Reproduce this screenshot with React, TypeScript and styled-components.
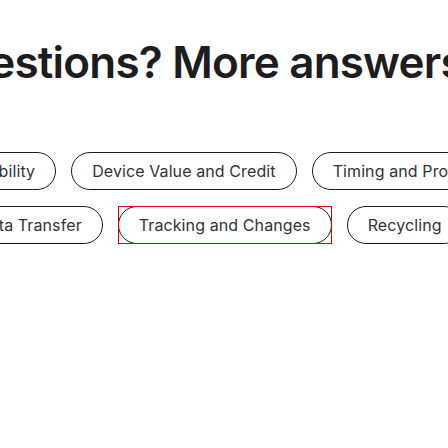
import React from "react"
import styled, { createGlobalStyle, css } from "styled-components"

const GlobalStyle = createGlobalStyle`
  html, body {
    margin: 0;
    padding: 0;
    background: #fff;
  }
  body {
    font-family: Inter, "Noto Sans", "Liberation Sans", sans-serif;
    color: #1d1d1f;
    -webkit-font-smoothing: antialiased;
  }
`

interface Topic {
  label: string
  focused?: boolean
}

// the rows are horizontally scrolled; offset is the scroll position
const rows: { offset: number; topics: Topic[] }[] = [
  {
    offset: -54,
    topics: [
      { label: "Eligibility" },
      { label: "Device Value and Credit" },
      { label: "Timing and Process" },
    ],
  },
  {
    offset: -43,
    topics: [
      { label: "Data Transfer" },
      { label: "Tracking and Changes", focused: true },
      { label: "Recycling" },
    ],
  },
]

export default function App() {
  return (
    <>
      <GlobalStyle />
      <Section>
        <TitleRow>
          <Title>Questions? More answers.</Title>
        </TitleRow>

        <Topics>
          {rows.map((row, i) => (
            <PillRow key={i} $offset={row.offset}>
              {row.topics.map(topic => (
                <Pill key={topic.label} $focused={topic.focused}>
                  {topic.label}
                </Pill>
              ))}
            </PillRow>
          ))}
        </Topics>
      </Section>
    </>
  )
}

const Section = styled.section`
  width: 448px;
  height: 448px;
  overflow: hidden;
  padding-top: 38px;
  box-sizing: border-box;
`

const TitleRow = styled.div`
  display: flex;
  justify-content: center;
  padding-right: 41px;
  white-space: nowrap;
`

const Title = styled.h2`
  margin: 0;
  flex-shrink: 0;
  font-size: 44px;
  line-height: 1.1;
  font-weight: 600;
  letter-spacing: -0.8px;
  color: #1d1d1f;
`

const Topics = styled.div`
  display: flex;
  flex-direction: column;
  gap: 16px;
  margin-top: 66px;
`

const PillRow = styled.div<{ $offset: number }>`
  display: flex;
  gap: 15px;
  margin-left: ${props => props.$offset}px;
  white-space: nowrap;
`

// square focus ring drawn over the pill's box
const focusRing = css`
  &::after {
    content: "";
    position: absolute;
    inset: -1px;
    border: 1px solid #e30000;
    pointer-events: none;
  }
`

const Pill = styled.button<{ $focused?: boolean }>`
  position: relative;
  flex-shrink: 0;
  height: 38px;
  padding: 0 20px;
  border: 1px solid #1d1d1f;
  border-radius: 19px;
  background: #fff;
  font-family: inherit;
  font-size: 16px;
  line-height: 20px;
  letter-spacing: 0.1px;
  color: #333336;
  cursor: pointer;
  outline: none;
  ${props => props.$focused && focusRing}
`
